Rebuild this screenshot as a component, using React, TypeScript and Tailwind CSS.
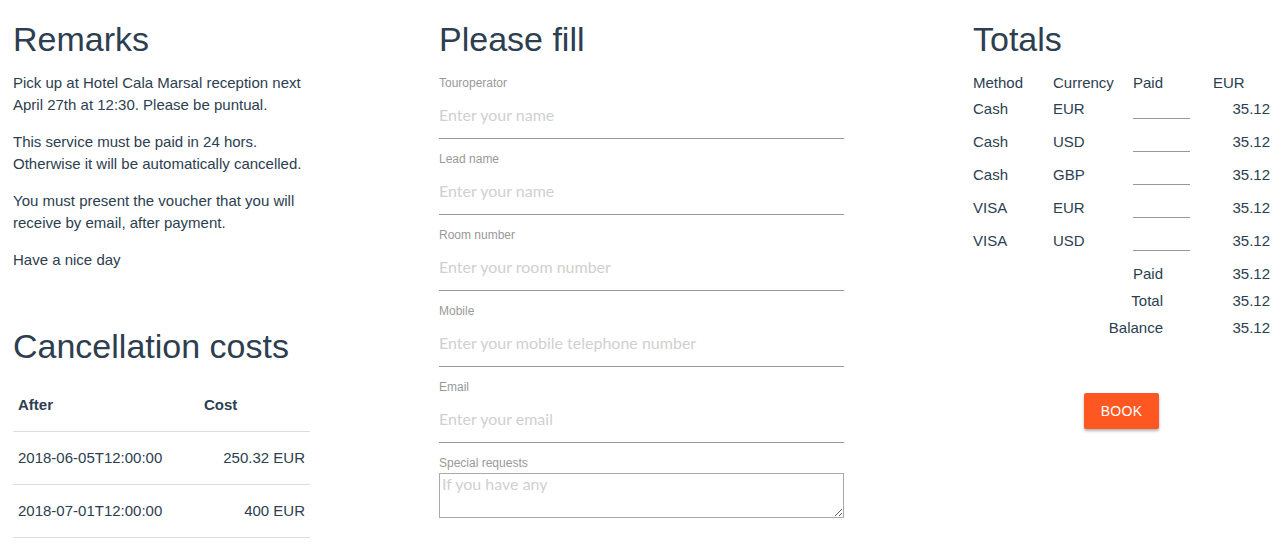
import React from "react";

const font = { fontFamily: '"Liberation Sans", Arial, sans-serif' };

const remarks = [
  "Pick up at Hotel Cala Marsal reception next April 27th at 12:30. Please be puntual.",
  "This service must be paid in 24 hors. Otherwise it will be automatically cancelled.",
  "You must present the voucher that you will receive by email, after payment.",
  "Have a nice day",
];

const costs = [
  { after: "2018-06-05T12:00:00", cost: "250.32 EUR" },
  { after: "2018-07-01T12:00:00", cost: "400 EUR" },
];

const fields = [
  { label: "Touroperator", placeholder: "Enter your name" },
  { label: "Lead name", placeholder: "Enter your name" },
  { label: "Room number", placeholder: "Enter your room number" },
  { label: "Mobile", placeholder: "Enter your mobile telephone number" },
  { label: "Email", placeholder: "Enter your email" },
];

const payments = [
  { method: "Cash", currency: "EUR" },
  { method: "Cash", currency: "USD" },
  { method: "Cash", currency: "GBP" },
  { method: "VISA", currency: "EUR" },
  { method: "VISA", currency: "USD" },
];

function Heading({ children, className = "" }: { children: React.ReactNode; className?: string }) {
  return (
    <h1 className={`text-[34px] leading-[40px] font-normal text-[#2c3e50] ${className}`}>{children}</h1>
  );
}

export default function App() {
  return (
    <div className="flex h-[545px] w-[1280px] bg-white text-[15px] text-[#2c3e50]" style={font}>
      {/* left column */}
      <div className="ml-[13px] w-[297px] pt-[19px]">
        <Heading>Remarks</Heading>
        <div className="mt-[13px] leading-[22px]">
          {remarks.map((r) => (
            <p key={r} className="mb-[15px]">
              {r}
            </p>
          ))}
        </div>
        <Heading className="mt-[55px]">Cancellation costs</Heading>
        <table className="mt-[12px] w-full border-collapse">
          <thead>
            <tr className="h-[53px] border-b border-[#dddddd]">
              <th className="w-[186px] px-[5px] pt-[2px] text-left font-bold">After</th>
              <th className="px-[5px] pt-[2px] text-left font-bold">Cost</th>
            </tr>
          </thead>
          <tbody>
            {costs.map((c) => (
              <tr key={c.after} className="h-[53px] border-b border-[#dddddd]">
                <td className="px-[5px] pt-[2px]">{c.after}</td>
                <td className="px-[5px] pt-[2px] text-right">{c.cost}</td>
              </tr>
            ))}
          </tbody>
        </table>
      </div>

      {/* middle column */}
      <div className="ml-[129px] w-[405px] pt-[19px]">
        <Heading>Please fill</Heading>
        <div className="mt-[17px] flex flex-col">
          {fields.map((f) => (
            <label key={f.label} className="mb-[13px] block">
              <span className="block text-[12px] leading-[14px] text-[#999999]">{f.label}</span>
              <input
                placeholder={f.placeholder}
                className="block h-[49px] w-full border-b border-[#999999] bg-transparent text-[16px] outline-none placeholder:text-[#d0d0d0]"
                style={{ fontFamily: "Lato, sans-serif" }}
              />
            </label>
          ))}
          <label className="block">
            <span className="block text-[12px] leading-[14px] text-[#999999]">Special requests</span>
            <textarea
              placeholder="If you have any"
              className="mt-[3px] block h-[45px] w-full border border-[#aaaaaa] px-[2px] py-0 text-[16px] leading-[20px] outline-none placeholder:text-[#d0d0d0]"
              style={{ fontFamily: "Lato, sans-serif" }}
            />
          </label>
        </div>
      </div>

      {/* right column */}
      <div className="ml-[129px] w-[297px] pt-[19px]">
        <Heading>Totals</Heading>
        <div className="mt-[13px] grid h-[22px] grid-cols-[80px_80px_80px_57px] items-center leading-[22px]">
          <span>Method</span>
          <span>Currency</span>
          <span>Paid</span>
          <span>EUR</span>
        </div>
        <div className="mt-[-1px]">
          {payments.map((p, i) => (
            <div key={i} className="grid h-[33px] grid-cols-[80px_80px_80px_57px] items-center">
              <span>{p.method}</span>
              <span>{p.currency}</span>
              <span className="relative h-full">
                <input className="absolute left-0 top-[8px] h-[18px] w-[57px] border-b border-[#999999] bg-transparent outline-none" />
              </span>
              <span className="text-right">35.12</span>
            </div>
          ))}
        </div>
        <div className="mt-[3px]">
          {["Paid", "Total", "Balance"].map((l) => (
            <div key={l} className="grid h-[27px] grid-cols-[190px_107px] items-center">
              <span className="text-right">{l}</span>
              <span className="text-right">35.12</span>
            </div>
          ))}
        </div>
        <div className="mt-[51px] flex justify-center">
          <button className="h-[36px] rounded-[2px] bg-[#ff5722] px-[17px] text-[14px] tracking-[0.3px] text-white uppercase shadow-[0_2px_3px_rgba(0,0,0,0.3)]">
            Book
          </button>
        </div>
      </div>
    </div>
  );
}
